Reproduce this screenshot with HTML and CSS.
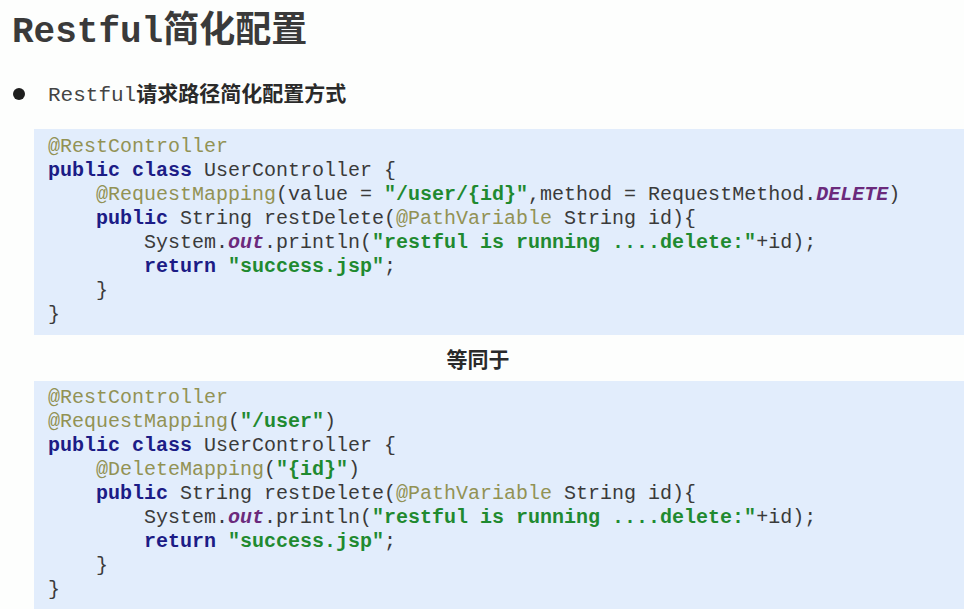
FILE: index.html
```html
<!DOCTYPE html>
<html lang="zh">
<head>
<meta charset="utf-8">
<link rel="stylesheet" href="styles.css">
</head>
<body>
<h1 class="title"><span class="mono">Restful</span>简化配置</h1>
<div class="bullet-row"><span class="dot"></span><span class="bullet-text"><span class="mono-light">Restful</span><b>请求路径简化配置方式</b></span></div>
<div class="code code-one">
<div class="ln"><span class="an">@RestController</span></div>
<div class="ln"><span class="kw">public class</span> UserController {</div>
<div class="ln i1"><span class="an">@RequestMapping</span>(value = <span class="str">"/user/{id}"</span>,method = RequestMethod.<span class="pu">DELETE</span>)</div>
<div class="ln i1"><span class="kw">public</span> String restDelete(<span class="an">@PathVariable</span> String id){</div>
<div class="ln i2">System.<span class="pu">out</span>.println(<span class="str">"restful is running ....delete:"</span>+id);</div>
<div class="ln i2"><span class="kw">return</span> <span class="str">"success.jsp"</span>;</div>
<div class="ln i1">}</div>
<div class="ln">}</div>
</div>
<div class="same">等同于</div>
<div class="code code-two">
<div class="ln"><span class="an">@RestController</span></div>
<div class="ln"><span class="an">@RequestMapping</span>(<span class="str">"/user"</span>)</div>
<div class="ln"><span class="kw">public class</span> UserController {</div>
<div class="ln i1"><span class="an">@DeleteMapping</span>(<span class="str">"{id}"</span>)</div>
<div class="ln i1"><span class="kw">public</span> String restDelete(<span class="an">@PathVariable</span> String id){</div>
<div class="ln i2">System.<span class="pu">out</span>.println(<span class="str">"restful is running ....delete:"</span>+id);</div>
<div class="ln i2"><span class="kw">return</span> <span class="str">"success.jsp"</span>;</div>
<div class="ln i1">}</div>
<div class="ln">}</div>
</div>
</body>
</html>
```
FILE: styles.css
```css
html, body {
  margin: 0;
  padding: 0;
  background: #fdfefd;
}
body {
  width: 964px;
  height: 609px;
  overflow: hidden;
  font-family: "Liberation Sans", "Noto Sans CJK SC", sans-serif;
  color: #333;
}
.title {
  margin: 0;
  padding: 0 0 0 12px;
  height: 52px;
  line-height: 52px;
  font-size: 36px;
  font-weight: bold;
  color: #3a3a3a;
  font-family: "Noto Sans CJK SC", sans-serif;
}
.title .mono {
  font-family: "Liberation Mono", monospace;
}
.bullet-row {
  display: flex;
  align-items: center;
  height: 32px;
  margin-top: 26px;
  padding-left: 13px;
}
.dot {
  width: 12px;
  height: 12px;
  border-radius: 50%;
  background: #1e1e1e;
  margin-right: 23px;
}
.bullet-text {
  font-size: 21px;
  line-height: 32px;
  color: #2a2a2a;
  font-family: "Noto Sans CJK SC", sans-serif;
}
.mono-light {
  font-family: "Liberation Mono", monospace;
  color: #444;
}
.bullet-text b {
  font-weight: bold;
}
.code {
  margin: 0 0 0 34px;
  background: #e2edfc;
  font-family: "Liberation Mono", monospace;
  font-size: 20px;
  line-height: 24px;
  color: #3a3a3a;
  padding-left: 14px;
}
.ln {
  white-space: pre;
  height: 24px;
}
.i1 { padding-left: 48px; }
.i2 { padding-left: 96px; }
.code-one {
  margin-top: 19px;
  padding-top: 6px;
  padding-bottom: 8px;
}
.code-two {
  padding-top: 5px;
  padding-bottom: 10px;
}
.same {
  height: 46px;
  line-height: 46px;
  text-align: center;
  padding-right: 8px;
  font-size: 21px;
  font-weight: bold;
  color: #2a2a2a;
  font-family: "Noto Sans CJK SC", sans-serif;
}
.an { color: #929254; }
.kw { color: #1c1c86; font-weight: bold; }
.str { color: #1f8a30; font-weight: bold; }
.pu { color: #6b2a7c; font-weight: bold; font-style: italic; }
```
